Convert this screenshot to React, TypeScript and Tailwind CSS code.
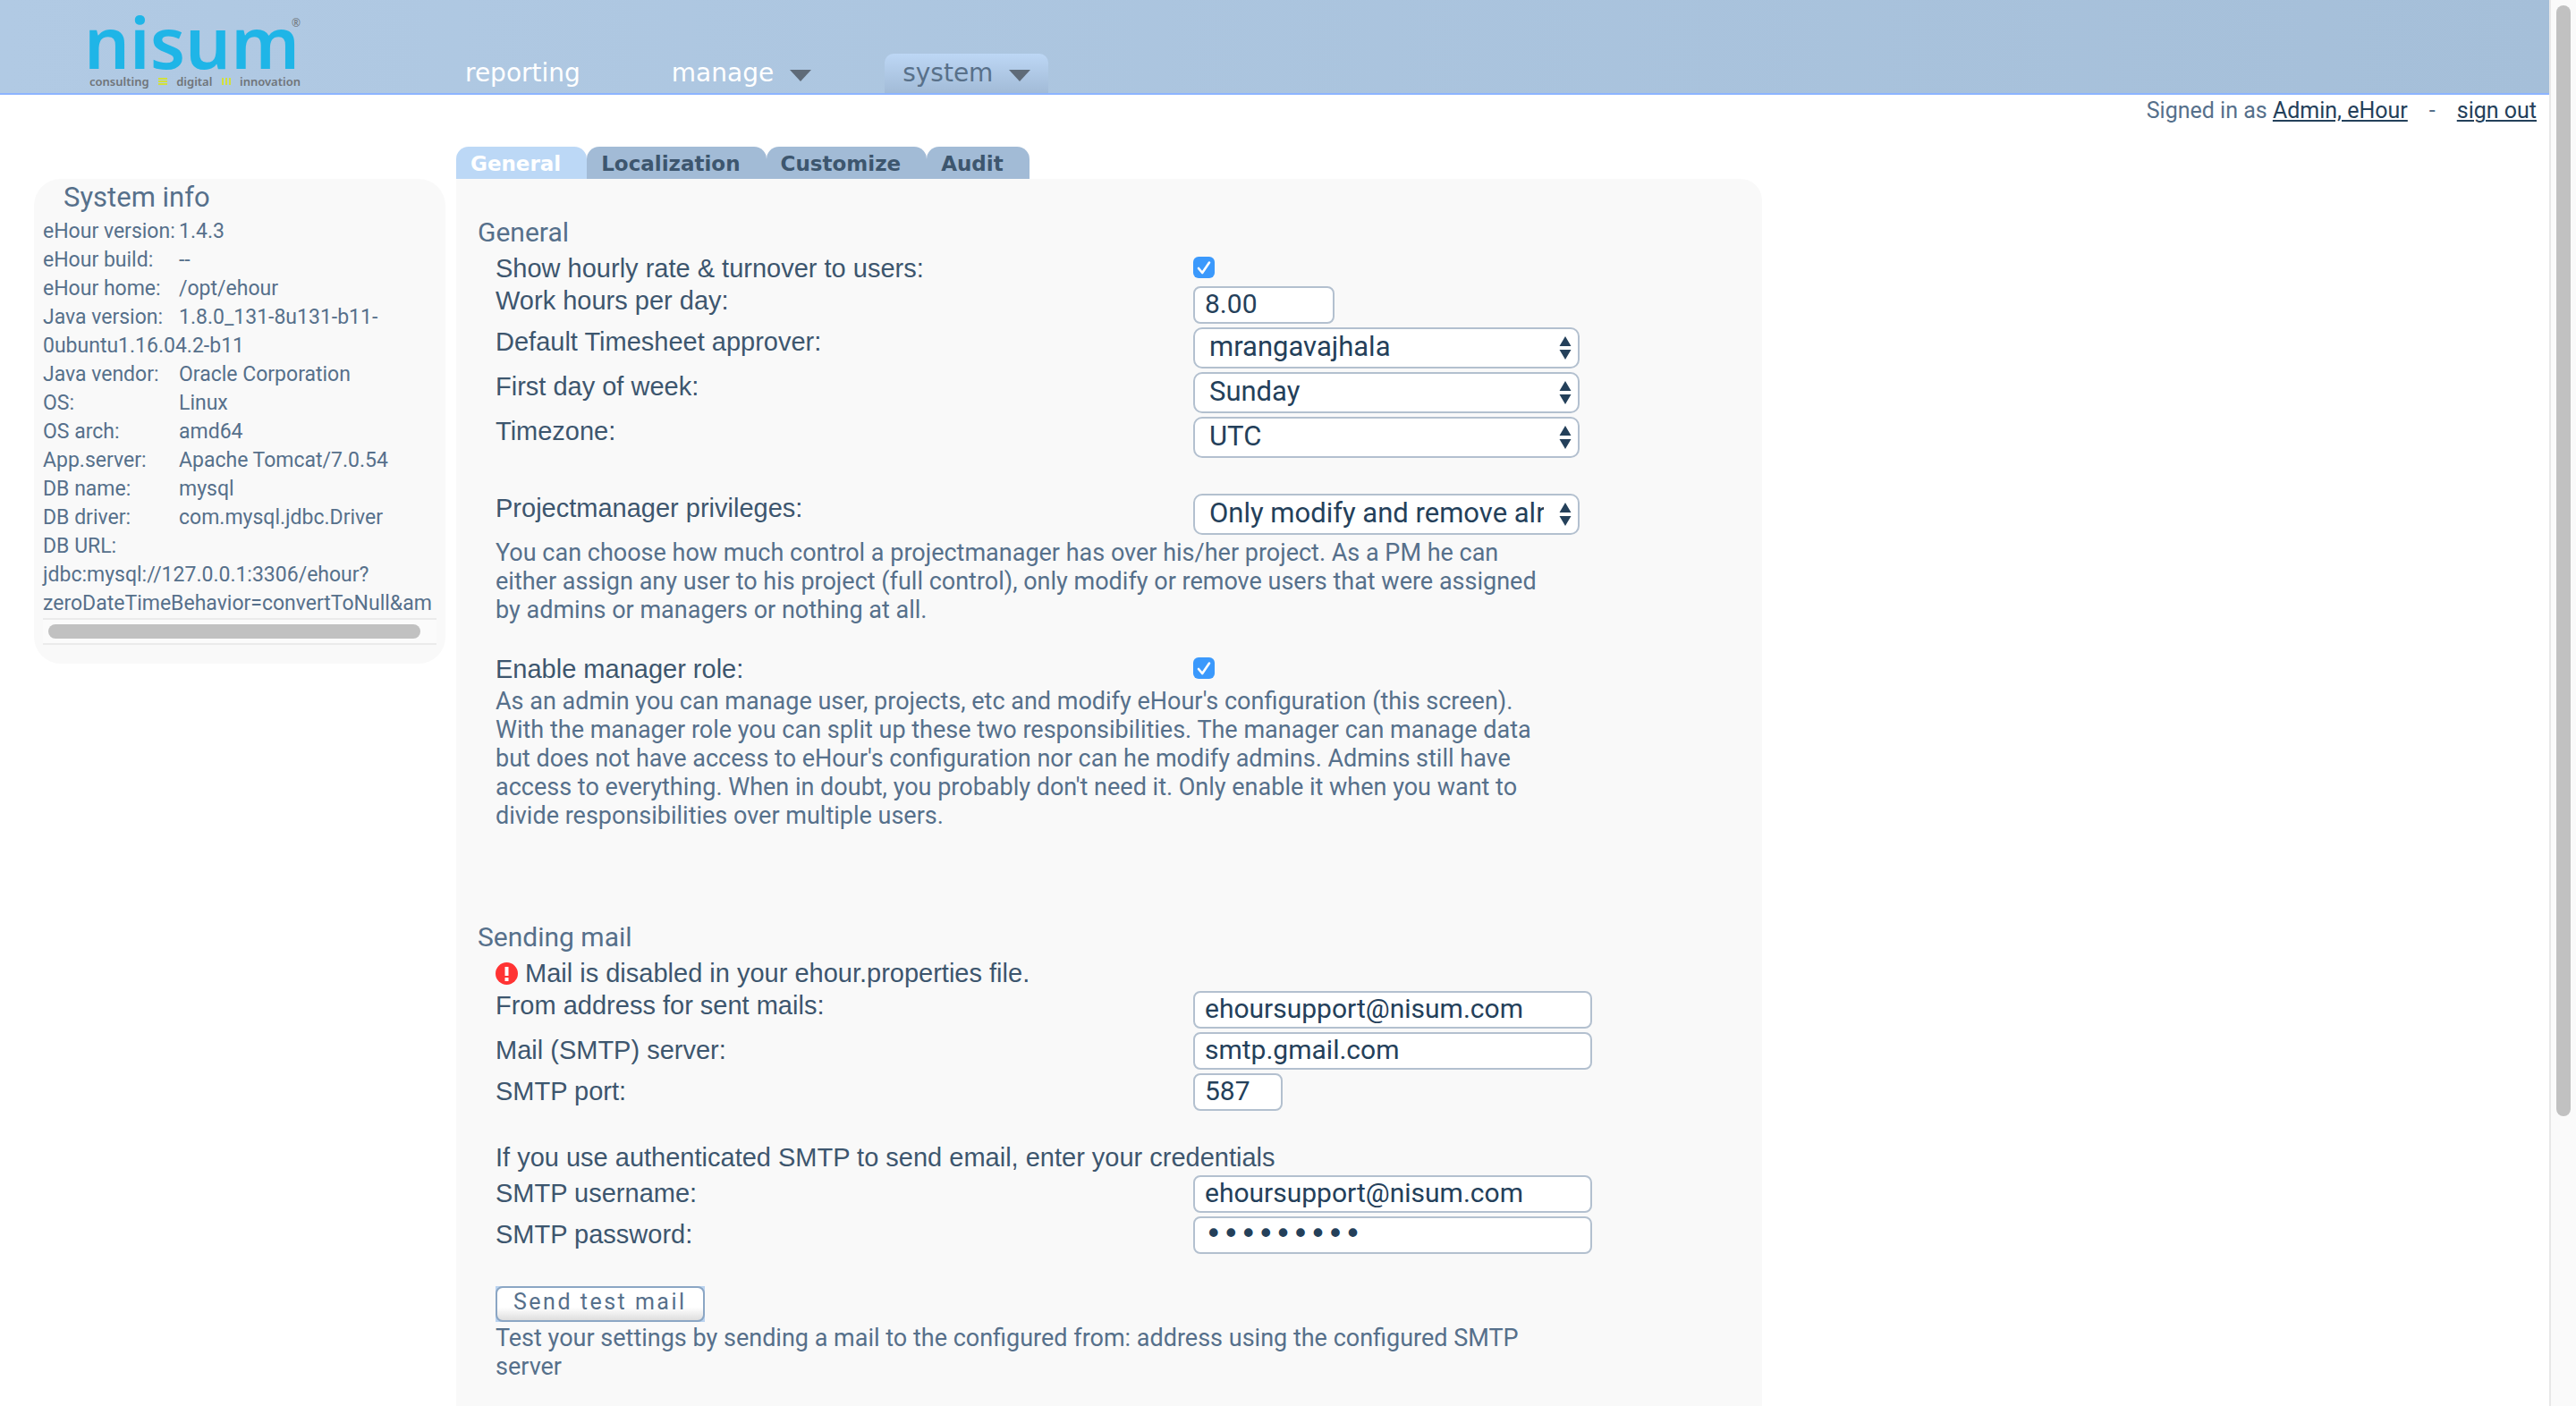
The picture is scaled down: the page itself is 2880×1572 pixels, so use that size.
import React, { useId } from 'react';

const verdana = 'font-["DejaVu_Sans",sans-serif]';
const grotesque = 'font-[Roboto,"Liberation_Sans",sans-serif]';

const systemInfo: [string, string][] = [
  ['eHour version:', '1.4.3'],
  ['eHour build:', '--'],
  ['eHour home:', '/opt/ehour'],
  ['Java version:', '1.8.0_131-8u131-b11-'],
  ['0ubuntu1.16.04.2-b11', ''],
  ['Java vendor:', 'Oracle Corporation'],
  ['OS:', 'Linux'],
  ['OS arch:', 'amd64'],
  ['App.server:', 'Apache Tomcat/7.0.54'],
  ['DB name:', 'mysql'],
  ['DB driver:', 'com.mysql.jdbc.Driver'],
  ['DB URL:', ''],
  ['jdbc:mysql://127.0.0.1:3306/ehour?', ''],
  ['zeroDateTimeBehavior=convertToNull&am', ''],
];

function Logo() {
  return (
    <div className='relative flex h-full w-[240px] flex-col font-["Noto_Sans",sans-serif]'>
      <div className="-ml-1 h-[83px] text-[80px] leading-[92px] font-semibold whitespace-nowrap text-[#1fb5e7]">nisum</div>
      <span className="absolute top-[18px] left-[228px] text-[12px] leading-4 text-[#6f7479]">®</span>
      <div className="flex items-center justify-between pr-0.5 pl-0.5 text-[13px] leading-4 font-semibold text-[#6f7479]">
        <span>consulting</span>
        <svg width="10" height="10" viewBox="0 0 10 10" fill="#d2e03c" className="shrink-0">
          <path d="M0 1h10v2H0zM0 4h10v2H0zM0 7h10v2H0z" />
        </svg>
        <span>digital</span>
        <svg width="10" height="10" viewBox="0 0 10 10" fill="#d2e03c" className="shrink-0">
          <path d="M0 1h2v8H0zM4 1h2v8H4zM8 1h2v8H8z" />
        </svg>
        <span>innovation</span>
      </div>
    </div>
  );
}

function Caret() {
  return (
    <svg width="24" height="13" viewBox="0 0 24 13" fill="#5f6b78" className="mt-1">
      <path d="M0 0h24L12 13z" />
    </svg>
  );
}

function Header() {
  return (
    <header className="flex h-[106px] items-end border-b-2 border-[#8cb4ff] bg-linear-to-r from-[#b1cae4] to-[#a5bfd9] pl-[98px]">
      <Logo />
      <nav className={`${verdana} ml-[162px] flex gap-[62px] text-[28px] leading-[44px] text-white`}>
        <a href="#reporting" className="px-5">reporting</a>
        <button className="flex items-center gap-[18px] px-5">
          manage <Caret />
        </button>
        <button className="flex items-center gap-[18px] rounded-t-[10px] bg-linear-to-b from-[#bdd7f5] to-[#a2bbd7] px-5 text-[#587089]">
          system <Caret />
        </button>
      </nav>
    </header>
  );
}

function SystemInfo() {
  return (
    <aside className={`${grotesque} w-[460px] shrink-0 self-start rounded-[30px] bg-[#f9f9f9] px-2.5 pb-[21px] text-[#56708b]`}>
      <h2 className="pt-0.5 pl-[23px] text-[31px] leading-[38px]">System info</h2>
      <div className="pt-[3px] text-[23px] leading-8 whitespace-nowrap">
        {systemInfo.map(([label, value]) => (
          <div key={label} className="flex">
            <span className="min-w-[152px]">{label}</span>
            <span>{value}</span>
          </div>
        ))}
      </div>
      <div className="border-y-2 border-[#ebebeb] bg-[#fbfbfb] py-[5px] pr-[18px] pl-1.5">
        <div className="h-4 rounded-full bg-[#c1c1c1]" />
      </div>
    </aside>
  );
}

const tabs = ['General', 'Localization', 'Customize', 'Audit'];

function Tabs() {
  return (
    <div role="tablist" className={`${verdana} flex text-[23px] leading-9 font-bold`}>
      {tabs.map((tab, i) => (
        <button
          key={tab}
          role="tab"
          aria-selected={i === 0}
          className={`rounded-t-[14px] pt-0.5 pr-[29px] pl-4 leading-[34px] ${
            i === 0 ? 'bg-[#bcd8f6] text-white' : 'bg-[#a2bbd6] text-[#3d566e]'
          }`}
        >
          {tab}
        </button>
      ))}
    </div>
  );
}

function Row({ label, low, children }: { label: string; low?: boolean; children: (id: string) => React.ReactNode }) {
  const id = useId();
  return (
    <div className="grid grid-cols-[780px_1fr] items-start pb-1">
      <label htmlFor={id} className={low ? 'pt-1' : ''}>{label}</label>
      {children(id)}
    </div>
  );
}

function Check({ id }: { id: string }) {
  return (
    <span className="relative mt-[3px] h-6 w-6">
      <input id={id} type="checkbox" defaultChecked className="block h-6 w-6 appearance-none rounded-[6px] bg-[#3b99fc]" />
      <svg viewBox="0 0 24 24" className="pointer-events-none absolute inset-0 h-6 w-6" fill="none" stroke="#fff" strokeWidth="2.6" strokeLinecap="round" strokeLinejoin="round">
        <path d="M6 13l4.2 5L18 6.500" />
      </svg>
    </span>
  );
}

function Field({ id, value, width, type = 'text' }: { id: string; value: string; width: string; type?: string }) {
  const face =
    type === 'password' ? 'font-["DejaVu_Sans",sans-serif] text-[33px]' : 'font-[Roboto,"Liberation_Sans",sans-serif] text-[30px]';
  return (
    <input
      id={id}
      type={type}
      defaultValue={value}
      className={`${face} ${width} h-[42px] rounded-[8px] border-2 border-[#b3c0cf] bg-white pb-1 pl-[11px] text-[#24405a]`}
    />
  );
}

function Select({ id, value }: { id: string; value: string }) {
  return (
    <span className="relative h-[46px] w-[432px]">
      <select
        id={id}
        className={`${grotesque} h-[46px] w-full appearance-none rounded-[10px] border-2 border-[#b3c0cf] bg-white pr-[38px] pb-0.5 pl-4 text-[31px] text-[#24405a]`}
      >
        <option>{value}</option>
      </select>
      <svg viewBox="0 0 14 26" className="pointer-events-none absolute top-2.5 right-[9px] h-[26px] w-3.5" fill="#24405a">
        <path d="M7 0l6.500 11H.5zM.5 15h13L7 26z" />
      </svg>
    </span>
  );
}

function Heading({ children }: { children: React.ReactNode }) {
  return <h2 className={`${grotesque} pb-1.5 text-[30px] leading-9 text-[#56708b]`}>{children}</h2>;
}

function Help({ children }: { children: React.ReactNode }) {
  return <p className={`${grotesque} max-w-[1175px] text-[27px] leading-8 text-[#56708b]`}>{children}</p>;
}

export default function App() {
  return (
    <div className="flex min-h-screen bg-white">
      <div className="flex flex-1 flex-col">
        <Header />
        <div className={`${grotesque} flex h-[58px] items-start justify-end pt-0.5 pr-3.5 text-[25px] leading-8 text-[#56708b]`}>
          <span>
            Signed in as{' '}
            <a href="#profile" className="text-[#24405a] underline decoration-2 underline-offset-2">Admin, eHour</a>
          </span>
          <span className="px-6">-</span>
          <a href="#signout" className="text-[#24405a] underline decoration-2 underline-offset-2">sign out</a>
        </div>
        <div className="flex flex-1 gap-3 pl-[38px]">
          <div className="flex pt-9">
            <SystemInfo />
          </div>
          <main className="flex w-[1460px] flex-col">
            <Tabs />
            <form className='flex-1 rounded-tr-[24px] bg-[#f9f9f9] pt-[42px] pb-7 pl-6 font-["Liberation_Sans",Arial,sans-serif] text-[29px] leading-8 text-[#3d566e]'>
              <Heading>General</Heading>
              <div className="pl-5">
                <Row label="Show hourly rate & turnover to users:">{(id) => <Check id={id} />}</Row>
                <Row label="Work hours per day:">{(id) => <Field id={id} value="8.00" width="w-[158px]" />}</Row>
                <Row label="Default Timesheet approver:">{(id) => <Select id={id} value="mrangavajhala" />}</Row>
                <Row label="First day of week:">{(id) => <Select id={id} value="Sunday" />}</Row>
                <Row label="Timezone:">{(id) => <Select id={id} value="UTC" />}</Row>
                <div className="pt-9">
                  <Row label="Projectmanager privileges:">
                    {(id) => <Select id={id} value="Only modify and remove already assigned users" />}
                  </Row>
                  <Help>
                    You can choose how much control a projectmanager has over his/her project. As a PM he can either
                    assign any user to his project (full control), only modify or remove users that were assigned by
                    admins or managers or nothing at all.
                  </Help>
                </div>
                <div className="pt-[34px]">
                  <Row label="Enable manager role:">{(id) => <Check id={id} />}</Row>
                  <Help>
                    As an admin you can manage user, projects, etc and modify eHour's configuration (this screen). With
                    the manager role you can split up these two responsibilities. The manager can manage data but does
                    not have access to eHour's configuration nor can he modify admins. Admins still have access to
                    everything. When in doubt, you probably don't need it. Only enable it when you want to divide
                    responsibilities over multiple users.
                  </Help>
                </div>
              </div>
              <div className="pt-[102px]">
                <Heading>Sending mail</Heading>
              </div>
              <div className="pl-5">
                <p className="flex items-center gap-2 pb-1">
                  <svg width="25" height="25" viewBox="0 0 25 25" fill="none">
                    <circle cx="12.500" cy="12.500" r="12.500" fill="#ff3333" />
                    <path d="M10.500 5h4v10h-4zM10.500 17h4v4h-4z" fill="#fff" />
                  </svg>
                  Mail is disabled in your ehour.properties file.
                </p>
                <Row label="From address for sent mails:">
                  {(id) => <Field id={id} value="ehoursupport@nisum.com" width="w-[446px]" />}
                </Row>
                <Row low label="Mail (SMTP) server:">
                  {(id) => <Field id={id} value="smtp.gmail.com" width="w-[446px]" />}
                </Row>
                <Row low label="SMTP port:">{(id) => <Field id={id} value="587" width="w-[100px]" />}</Row>
                <p className="pt-8 pb-1">If you use authenticated SMTP to send email, enter your credentials</p>
                <Row low label="SMTP username:">
                  {(id) => <Field id={id} value="ehoursupport@nisum.com" width="w-[446px]" />}
                </Row>
                <Row low label="SMTP password:">
                  {(id) => <Field id={id} value="password1" type="password" width="w-[446px]" />}
                </Row>
                <div className="pt-8 pb-0.5">
                  <button
                    type="button"
                    className={`${grotesque} block bg-[#b9d2ef] text-[25px] tracking-widest text-[#56708b]`}
                  >
                    <span className="block h-10 rounded-[8px] border-2 border-[#8ba6c4] bg-linear-to-b from-white from-60% to-[#dedede] px-[18px] leading-8">
                      Send test mail
                    </span>
                  </button>
                </div>
                <Help>
                  Test your settings by sending a mail to the configured from: address using the configured SMTP server
                </Help>
              </div>
            </form>
          </main>
        </div>
      </div>
      <div className="w-[30px] border-l-2 border-[#e8e8e8] bg-[#fafafa] pt-1.5 pl-1.5">
        <div className="h-[79vh] w-4 rounded-full bg-[#c1c1c1]" />
      </div>
    </div>
  );
}
